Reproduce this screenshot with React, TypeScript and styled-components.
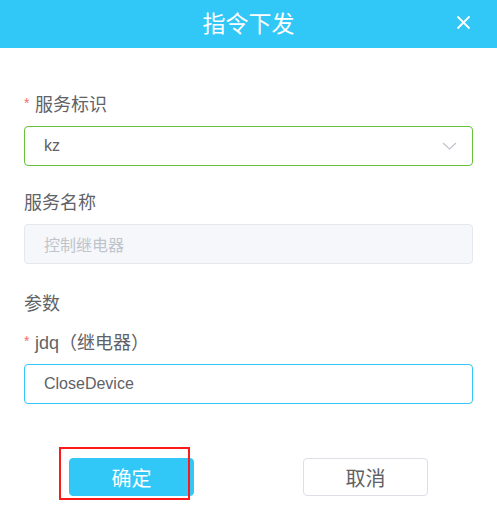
import React from "react";
import styled, { createGlobalStyle } from "styled-components";

const Global = createGlobalStyle`
  html, body { margin: 0; padding: 0; background: #ffffff; }
  body { font-family: "Liberation Sans", "Noto Sans CJK SC", sans-serif; }
  * { box-sizing: border-box; }
`;

const Dialog = styled.div`
  width: 497px;
  height: 530px;
  background: #ffffff;
  font-family: "Liberation Sans", "Noto Sans CJK SC", sans-serif;
`;

const Header = styled.div`
  height: 48px;
  background: #31c7f7;
  display: flex;
  align-items: center;
  justify-content: center;
  position: relative;
`;

const Title = styled.div`
  color: #ffffff;
  font-size: 23px;
  line-height: 48px;
`;

const CloseButton = styled.button`
  position: absolute;
  right: 26px;
  top: 15px;
  width: 15px;
  height: 15px;
  padding: 0;
  border: none;
  background: transparent;
  display: flex;
  align-items: center;
  justify-content: center;
`;

const Body = styled.div`
  padding: 44px 24px 0 24px;
  display: flex;
  flex-direction: column;
`;

const Field = styled.div`
  display: flex;
  flex-direction: column;
  margin-bottom: 24px;
`;

const Label = styled.div`
  font-size: 18px;
  line-height: 26px;
  height: 26px;
  color: #606266;
  margin-bottom: 8px;
  white-space: nowrap;
  display: flex;
  align-items: center;
`;

const Star = styled.span`
  color: #f56c6c;
  font-size: 14px;
  width: 11px;
  align-self: flex-start;
  line-height: 22px;
`;

const Section = styled.div`
  font-size: 18px;
  line-height: 26px;
  height: 26px;
  color: #606266;
  margin-top: 3px;
  margin-bottom: 13px;
`;

const Box = styled.div<{ $variant: "select" | "focus" | "disabled" }>`
  height: 40px;
  border-radius: 4px;
  border: 1px solid
    ${(p) =>
      p.$variant === "select" ? "#67c23a" : p.$variant === "focus" ? "#31c7f7" : "#e4e7ed"};
  background: ${(p) => (p.$variant === "disabled" ? "#f5f7fa" : "#ffffff")};
  color: ${(p) => (p.$variant === "disabled" ? "#c0c4cc" : "#606266")};
  display: flex;
  align-items: center;
  padding: 0 15px 0 19px;
  font-size: 16px;
`;

const BoxText = styled.span`
  flex: 1;
`;

const Footer = styled.div`
  display: flex;
  justify-content: space-between;
  padding: 30px 69px 0 69px;
`;

const Button = styled.div<{ $primary?: boolean }>`
  position: relative;
  width: 125px;
  height: 38px;
  border-radius: 4px;
  display: flex;
  align-items: center;
  justify-content: center;
  font-size: 20px;
  background: ${(p) => (p.$primary ? "#31c7f7" : "#ffffff")};
  color: ${(p) => (p.$primary ? "#ffffff" : "#606266")};
  border: 1px solid ${(p) => (p.$primary ? "#31c7f7" : "#dcdfe6")};
`;

const Highlight = styled.div`
  position: absolute;
  left: -11px;
  top: -12px;
  width: 131px;
  height: 53px;
  border: 2px solid #ff1a1a;
  pointer-events: none;
`;

const Chevron = () => (
  <svg width="15" height="8" viewBox="0 0 15 8" fill="none">
    <path d="M1 1 L7.5 7 L14 1" stroke="#c0c4cc" strokeWidth="1.2" />
  </svg>
);

const CloseIcon = () => (
  <svg width="15" height="15" viewBox="0 0 15 15" fill="none">
    <path d="M1.5 1.5 L13.5 13.5 M13.5 1.5 L1.5 13.5" stroke="#ffffff" strokeWidth="1.8" />
  </svg>
);

export default function App() {
  return (
    <>
      <Global />
      <Dialog>
        <Header>
          <Title>指令下发</Title>
          <CloseButton aria-label="close">
            <CloseIcon />
          </CloseButton>
        </Header>
        <Body>
          <Field>
            <Label>
              <Star>*</Star>服务标识
            </Label>
            <Box $variant="select">
              <BoxText>kz</BoxText>
              <Chevron />
            </Box>
          </Field>
          <Field>
            <Label>服务名称</Label>
            <Box $variant="disabled">
              <BoxText>控制继电器</BoxText>
            </Box>
          </Field>
          <Section>参数</Section>
          <Field>
            <Label>
              <Star>*</Star>jdq（继电器）
            </Label>
            <Box $variant="focus">
              <BoxText>CloseDevice</BoxText>
            </Box>
          </Field>
        </Body>
        <Footer>
          <Button $primary>
            确定
            <Highlight />
          </Button>
          <Button>取消</Button>
        </Footer>
      </Dialog>
    </>
  );
}
